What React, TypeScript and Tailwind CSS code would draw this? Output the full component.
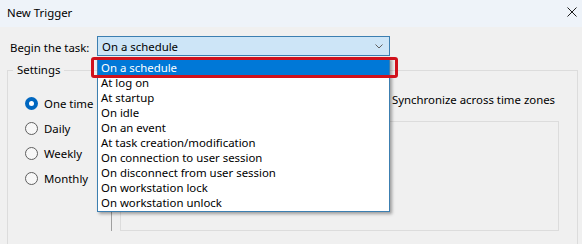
import React from 'react';

const triggers = [
    'On a schedule',
    'At log on',
    'At startup',
    'On idle',
    'On an event',
    'At task creation/modification',
    'On connection to user session',
    'On disconnect from user session',
    'On workstation lock',
    'On workstation unlock',
];

const Radio = ({ label, checked = false }: { label: string; checked?: boolean }) => (
    <div className="flex h-[25px] items-center gap-[6px]">
        {checked ? (
            <span className="flex h-[13px] w-[13px] items-center justify-center rounded-full bg-[#0067c0]">
                <span className="h-[5px] w-[5px] rounded-full bg-white" />
            </span>
        ) : (
            <span className="h-[13px] w-[13px] rounded-full border border-[#5f5f5f] bg-[#f7f7f7]" />
        )}
        <span>{label}</span>
    </div>
);

const App: React.FC = () => {
    return (
        <div className="relative h-[244px] w-[582px] overflow-hidden bg-[#f0f0f0] font-['Noto_Sans',sans-serif] text-[11.4px] leading-[15px] text-black">
            {/* Title bar */}
            <div className="flex h-[27px] items-center justify-between bg-[#eef3f9] pl-[7px] pr-[5px]">
                <span className="-mt-[3px]">New Trigger</span>
                <svg width="10" height="10" viewBox="0 0 10 10" className="-mt-[3px]">
                    <path d="M0.5 0.5 L9.5 9.5 M9.5 0.5 L0.5 9.5" stroke="#1b1b1b" strokeWidth="1" fill="none" />
                </svg>
            </div>

            {/* Begin the task row */}
            <div className="flex items-center pl-[10px] pt-[9px]">
                <span className="mt-[3px] w-[87px]">Begin the task:</span>
                <div className="flex h-[20px] w-[293px] items-center justify-between border border-[#3c7fb1] bg-[#cde5f7] pl-[4px] pr-[6px]">
                    <span>On a schedule</span>
                    <svg width="8" height="5" viewBox="0 0 8 5">
                        <path d="M0.5 0.5 L4 4 L7.5 0.5" stroke="#606060" strokeWidth="1" fill="none" />
                    </svg>
                </div>
            </div>

            {/* Settings group */}
            <fieldset className="ml-[7px] mt-[6px] h-[200px] w-[571px] border border-[#dcdcdc]">
                <legend className="ml-[5px] px-[4px] leading-[16px]">Settings</legend>
                <div className="flex">
                    <div className="w-[103px] pl-[17px] pt-[13px]">
                        <Radio label="One time" checked />
                        <Radio label="Daily" />
                        <Radio label="Weekly" />
                        <Radio label="Monthly" />
                    </div>
                    <div className="mt-[7px] flex-1 border-l border-[#a0a0a0] pl-[8px]">
                        <div className="mt-[6px] flex h-[16px] items-center gap-[3px] pl-[256px]">
                            <span className="h-[13px] w-[13px] border border-[#333] bg-white" />
                            <span>Synchronize across time zones</span>
                        </div>
                        <div className="mt-[14px] h-[110px] w-[439px] border border-[#dcdcdc]" />
                    </div>
                </div>
            </fieldset>

            {/* Open dropdown list */}
            <div className="absolute left-[97px] top-[57px] w-[293px] border border-[#3c7fb1] bg-white pb-[1px] pt-[2px] shadow-[2px_2px_3px_rgba(0,0,0,0.35)]">
                {triggers.map((t, i) => (
                    <div
                        key={t}
                        className={`h-[15px] pl-[3px] leading-[15px] ${i === 0 ? 'bg-[#0078d7] text-white' : ''}`}
                    >
                        {t}
                    </div>
                ))}
            </div>

            {/* Red highlight annotation */}
            <div className="absolute left-[91px] top-[57px] h-[21px] w-[307px] rounded-[3px] border-[3px] border-[#d0121c]" />
        </div>
    );
};

export default App;
